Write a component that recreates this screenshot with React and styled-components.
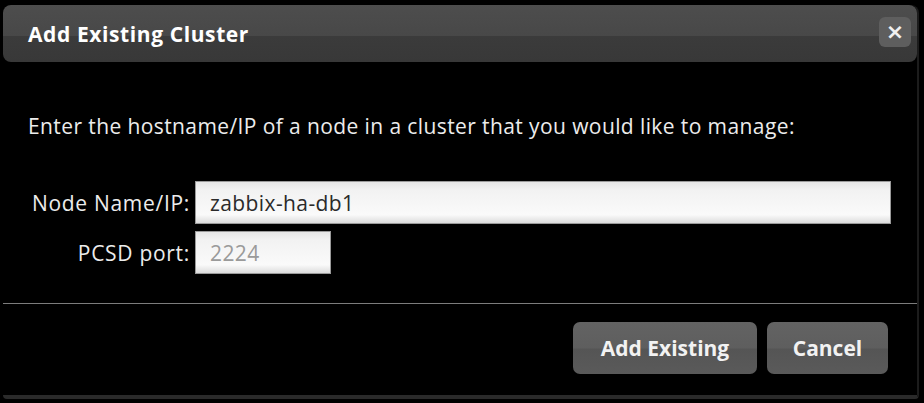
import React from "react";
import styled, { createGlobalStyle } from "styled-components";

const GlobalStyle = createGlobalStyle`
  html, body {
    margin: 0;
    padding: 0;
    background: #000;
  }
  body {
    font-family: "Open Sans", "Noto Sans", "DejaVu Sans", sans-serif;
  }
`;

const Dialog = styled.div`
  width: 916px;
  height: 394px;
  margin: 5px 0 0 3px;
  background: #000;
  display: flex;
  flex-direction: column;
  border-right: 2px solid #1c1c1c;
  border-bottom: 4px solid #2a2a2a;
  border-radius: 8px 8px 4px 4px;
  box-sizing: border-box;
`;

const Header = styled.div`
  height: 57px;
  border-radius: 8px;
  background: linear-gradient(to bottom, #4d4d4d 0%, #484848 54%, #3b3b3b 55%, #383838 100%);
  display: flex;
  align-items: center;
  justify-content: space-between;
  padding: 0 6px 0 25px;
`;

const Title = styled.h1`
  margin: 0;
  font-size: 21px;
  font-weight: 700;
  color: #fff;
  letter-spacing: 0.6px;
`;

const CloseButton = styled.button`
  width: 32px;
  height: 30px;
  margin-bottom: 4px;
  border: none;
  border-radius: 6px;
  background: #5e5e5e;
  color: #f0f0f0;
  font-family: "DejaVu Sans", sans-serif;
  font-size: 22px;
  font-weight: 700;
  padding: 0;
  display: flex;
  align-items: center;
  justify-content: center;
`;

const Body = styled.div`
  padding: 51px 0 0 25px;
  display: flex;
  flex-direction: column;
`;

const Prompt = styled.p`
  margin: 0;
  font-size: 21px;
  letter-spacing: 0.4px;
  color: #ececec;
  line-height: 26px;
`;

const Form = styled.div`
  margin-top: 42px;
  display: grid;
  grid-template-columns: 162px auto;
  column-gap: 5px;
  row-gap: 7px;
  align-items: center;
`;

const Label = styled.label`
  text-align: right;
  font-size: 21px;
  letter-spacing: 0.7px;
  color: #ececec;
`;

const Input = styled.input`
  width: ${(p) => p.$width}px;
  height: 43px;
  box-sizing: border-box;
  border: 1px solid #9a9a9a;
  background: linear-gradient(to bottom, #e6e6e6 0%, #f2f2f2 20%, #fafafa 80%, #dcdcdc 100%);
  font-family: inherit;
  font-size: 21px;
  letter-spacing: 0.4px;
  color: #2a2a2a;
  padding: 0 0 0 14px;
  outline: none;

  &::placeholder {
    color: #9a9a9a;
  }
`;

const Separator = styled.hr`
  margin: 29px 0 0 0;
  border: none;
  height: 1px;
  background: #7c7c7c;
`;

const Footer = styled.div`
  display: flex;
  justify-content: flex-end;
  gap: 10px;
  padding: 18px 29px 0 0;
`;

const Button = styled.button`
  width: ${(p) => p.$width}px;
  height: 52px;
  padding: 0;
  border: none;
  border-radius: 7px;
  background: linear-gradient(to bottom, #636363 0%, #5e5e5e 50%, #555 52%, #5a5a5a 100%);
  color: #f2f2f2;
  font-family: inherit;
  font-size: 21px;
  font-weight: 700;
`;

export default function App() {
  return (
    <>
      <GlobalStyle />
      <Dialog>
        <Header>
          <Title>Add Existing Cluster</Title>
          <CloseButton>×</CloseButton>
        </Header>
        <Body>
          <Prompt>
            Enter the hostname/IP of a node in a cluster that you would like to manage:
          </Prompt>
          <Form>
            <Label>Node Name/IP:</Label>
            <Input $width={696} defaultValue="zabbix-ha-db1" />
            <Label>PCSD port:</Label>
            <Input $width={136} placeholder="2224" />
          </Form>
        </Body>
        <Separator />
        <Footer>
          <Button $width={184}>Add Existing</Button>
          <Button $width={121}>Cancel</Button>
        </Footer>
      </Dialog>
    </>
  );
}
